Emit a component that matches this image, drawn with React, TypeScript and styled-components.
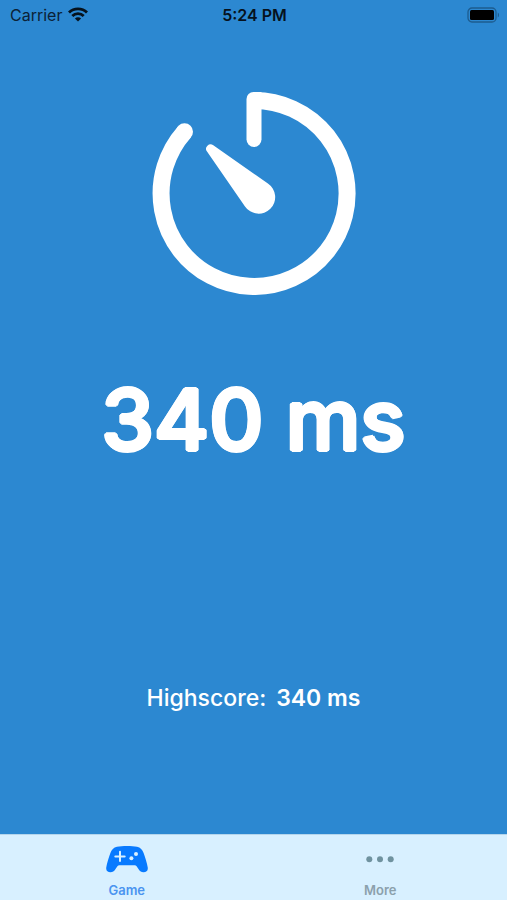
import React, { useState } from "react";
import styled, { createGlobalStyle } from "styled-components";

const GlobalStyle = createGlobalStyle`
  *, *::before, *::after { box-sizing: border-box; }
  body { margin: 0; background: #2c88d1; }
`;

/* A ring of solid shadows thickens the glyphs and rounds off their ends. */
const roundedOutline = (radius: number, color: string) =>
  Array.from({ length: 8 }, (_, i) => {
    const angle = (i * Math.PI) / 4;
    const x = (Math.cos(angle) * radius).toFixed(2);
    const y = (Math.sin(angle) * radius).toFixed(2);
    return `${x}px ${y}px 0 ${color}`;
  }).join(", ");

const Screen = styled.div`
  display: flex;
  flex-direction: column;
  min-height: 100vh;
  background: #2c88d1;
  color: #ffffff;
  font-family: Inter, "Liberation Sans", sans-serif;
`;

const StatusBar = styled.header`
  display: grid;
  grid-template-columns: 1fr auto 1fr;
  align-items: center;
  height: 28px;
  padding: 1px 8px 0 10px;
  font-size: 16px;
  line-height: 20px;
  color: #0b2236;
`;

const Carrier = styled.div`
  display: flex;
  align-items: center;
  gap: 6px;
`;

const Clock = styled.time`
  font-weight: 600;
  color: #06121d;
`;

const Battery = styled.div`
  display: flex;
  justify-content: flex-end;
`;

const Main = styled.main`
  flex: 1;
  display: flex;
  flex-direction: column;
  align-items: center;
  padding: 63px 16px 120px;
`;

const Result = styled.h1`
  margin: 77px 0 0;
  font-size: 84px;
  line-height: 96px;
  font-weight: 500;
  white-space: nowrap;
  text-shadow: ${roundedOutline(2, "#ffffff")};
`;

const Highscore = styled.p`
  display: flex;
  gap: 10px;
  margin: auto 0 0;
  font-size: 23px;
  line-height: 32px;
  font-weight: 500;
`;

const Score = styled.strong`
  font-weight: 600;
`;

const TabBar = styled.nav`
  display: grid;
  grid-template-columns: 1fr 1fr;
  height: 66px;
  background: #d8f0ff;
  border-top: 1px solid #b4d5ec;
`;

const Tab = styled.button<{ $active: boolean }>`
  display: flex;
  flex-direction: column;
  align-items: center;
  gap: 6px;
  padding: 7px 0 0;
  border: 0;
  background: none;
  font: inherit;
  font-size: 13px;
  line-height: 16px;
  font-weight: 600;
  color: ${(p) => (p.$active ? "#4a94f0" : "#8ba0ac")};
  cursor: pointer;
`;

const WifiIcon = () => (
  <svg width="20" height="15" viewBox="0 0 20 15" fill="none" stroke="#06121d" strokeWidth="2.8" aria-hidden="true">
    <path d="M1 5.6a12.7 12.7 0 0 1 18 0" />
    <path d="M4.3 9.1a8 8 0 0 1 11.4 0" />
    <path d="M10 14.6l-3.1-3.1a4.4 4.4 0 0 1 6.2 0z" fill="#06121d" stroke="none" />
  </svg>
);

const BatteryIcon = () => (
  <svg width="32" height="16" viewBox="0 0 32 16" role="img" aria-label="Battery full">
    <rect x="1" y="1" width="28" height="14" rx="4" fill="none" stroke="#1d5c8f" strokeWidth="1.3" />
    <rect x="3" y="3" width="24" height="10" rx="1.5" fill="#000000" />
    <path d="M30.8 5.6c1.6.7 1.6 4.1 0 4.8z" fill="#1d5c8f" />
  </svg>
);

const TimerIcon = () => (
  <svg width="204" height="204" viewBox="0 0 204 204" aria-hidden="true">
    <path d="M32.5 40.8A93 93 0 1 0 102 9.5" fill="none" stroke="#ffffff" strokeWidth="17" />
    <circle cx="32.5" cy="40.8" r="8.5" fill="#ffffff" />
    <path d="M94.5 8a7 7 0 0 1 7-7H109.5V48.5a7.5 7.5 0 0 1-15 0z" fill="#ffffff" />
    <path d="M61.3 54.3L115.9 92.5A16.5 16.5 0 1 1 93 115.4L55 60.6A4.5 4.5 0 0 1 61.3 54.3z" fill="#ffffff" />
  </svg>
);

const GameIcon = () => (
  <svg width="42" height="34" viewBox="0 0 42 34" aria-hidden="true">
    <path
      d="M11 4.8C16 3.6 26 3.6 31 4.8C34.5 5.6 36.4 7.7 37.6 11C39.4 16 41 21 41.7 25.3C42.3 28.6 40.3 30.2 37.5 30.2C35.3 30.2 34 29.3 32.8 27.5L30.6 24.3Q30 23.3 28.6 23.3H13.4Q12 23.3 11.4 24.3L9.2 27.5C8 29.3 6.7 30.2 4.5 30.2C1.7 30.2-.3 28.6.3 25.3C1 21 2.6 16 4.4 11C5.6 7.7 7.5 5.6 11 4.8z"
      fill="#087aff"
    />
    <path d="M14 9.7v9.4M9.3 14.4h9.4" stroke="#d8f0ff" strokeWidth="2" strokeLinecap="round" />
    <circle cx="30" cy="12" r="2" fill="#d8f0ff" />
    <circle cx="25.4" cy="16.3" r="2" fill="#d8f0ff" />
  </svg>
);

const MoreIcon = () => (
  <svg width="42" height="34" viewBox="0 0 42 34" fill="#6f929f" aria-hidden="true">
    <circle cx="10.3" cy="17.3" r="3" />
    <circle cx="21" cy="17.3" r="3" />
    <circle cx="31.7" cy="17.3" r="3" />
  </svg>
);

const tabs = [
  { id: "game", label: "Game", Icon: GameIcon },
  { id: "more", label: "More", Icon: MoreIcon },
];

export default function App() {
  const [active, setActive] = useState("game");
  return (
    <Screen>
      <GlobalStyle />
      <StatusBar>
        <Carrier>
          Carrier
          <WifiIcon />
        </Carrier>
        <Clock>5:24 PM</Clock>
        <Battery>
          <BatteryIcon />
        </Battery>
      </StatusBar>
      <Main>
        <TimerIcon />
        <Result>340 ms</Result>
        <Highscore>
          <span>Highscore:</span>
          <Score>340 ms</Score>
        </Highscore>
      </Main>
      <TabBar>
        {tabs.map(({ id, label, Icon }) => (
          <Tab
            key={id}
            type="button"
            $active={active === id}
            aria-current={active === id ? "page" : undefined}
            onClick={() => setActive(id)}
          >
            <Icon />
            {label}
          </Tab>
        ))}
      </TabBar>
    </Screen>
  );
}
